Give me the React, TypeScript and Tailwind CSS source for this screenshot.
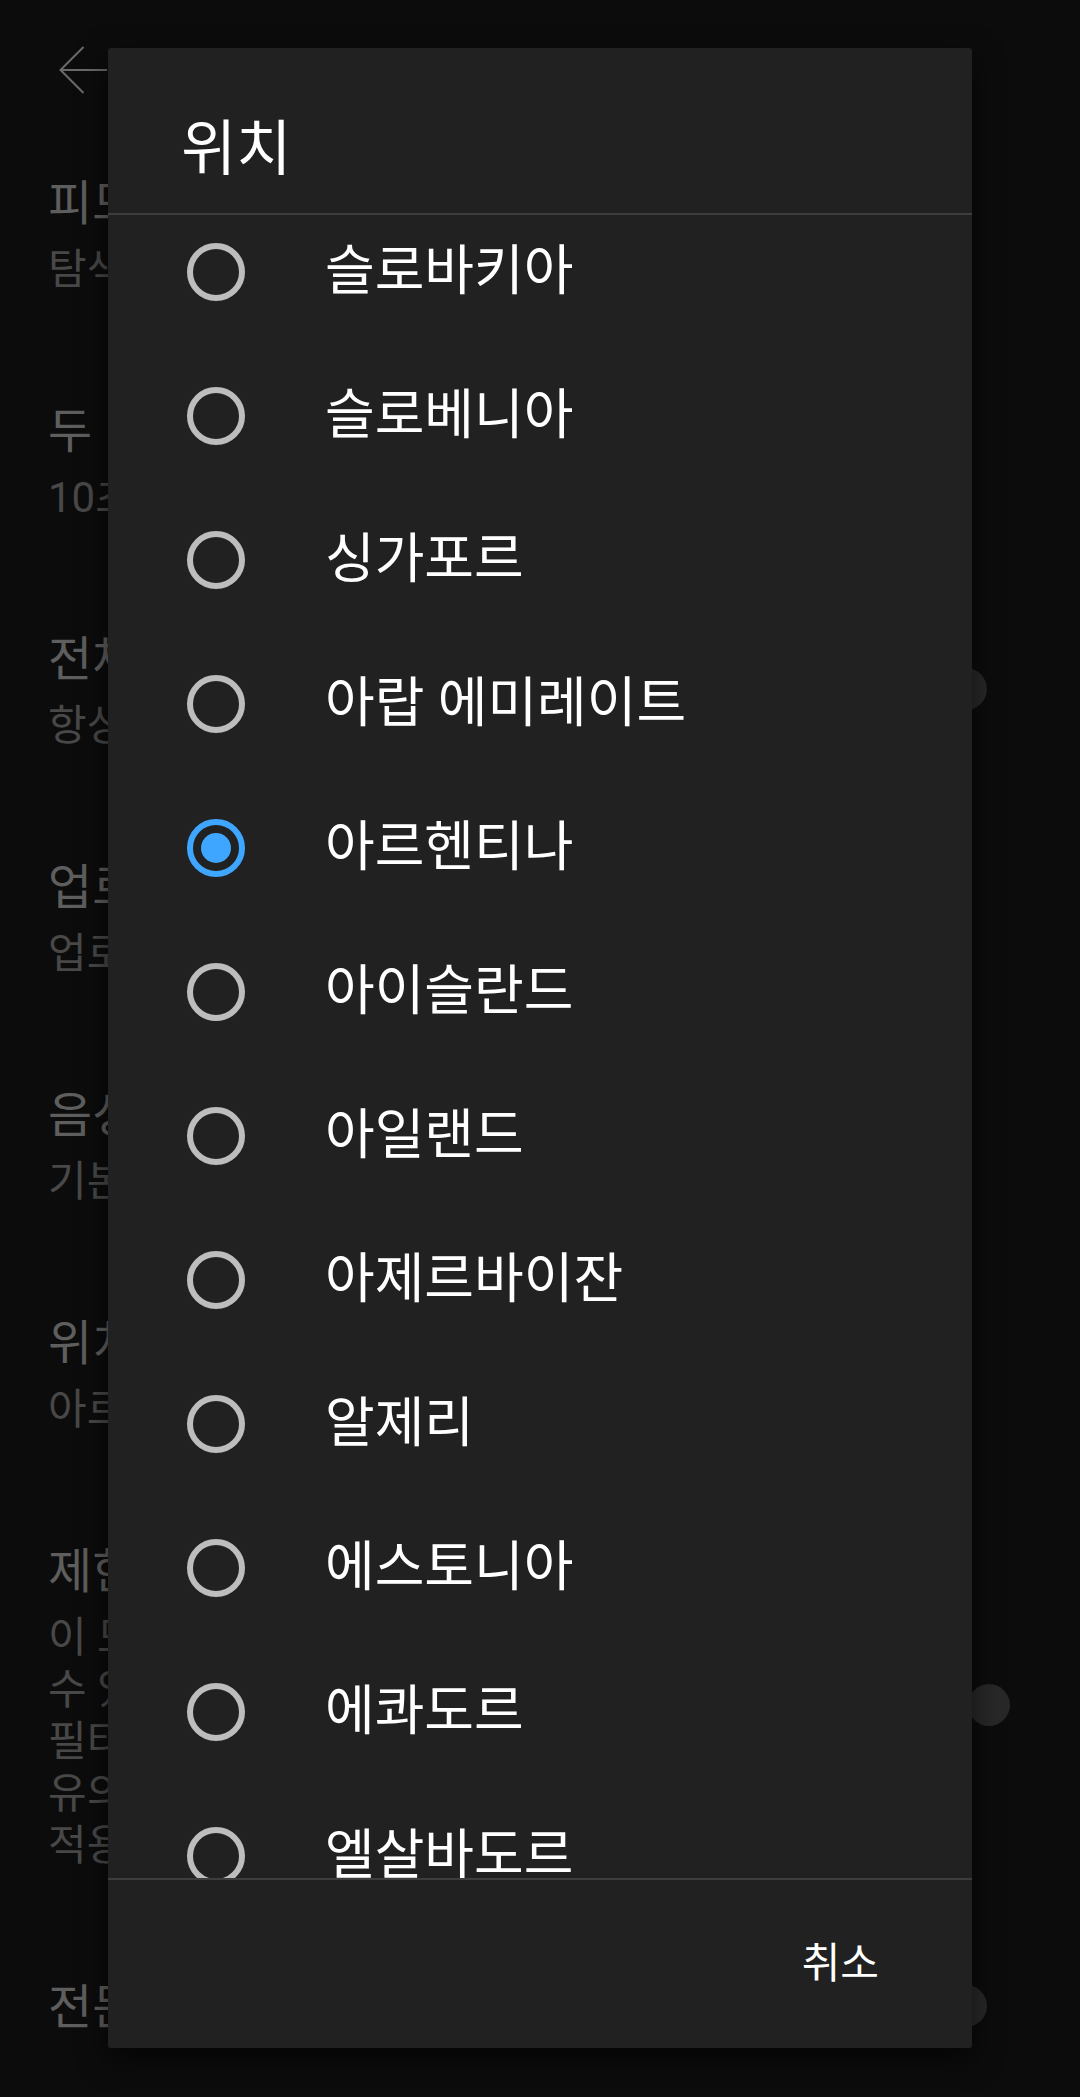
import React from "react";

const FONT = { fontFamily: 'Roboto, "Noto Sans CJK KR", sans-serif' };

const countries = [
  "슬로바키아",
  "슬로베니아",
  "싱가포르",
  "아랍 에미레이트",
  "아르헨티나",
  "아이슬란드",
  "아일랜드",
  "아제르바이잔",
  "알제리",
  "에스토니아",
  "에콰도르",
  "엘살바도르",
  "영국",
];

type Row = { title: string; lines: string[]; toggle?: boolean };

const rows: Row[] = [
  { title: "피드에서 음소거 재생", lines: ["탐색 및 구독 피드"] },
  { title: "두 번 탭하여 탐색", lines: ["10초"] },
  { title: "전체 화면 확대/축소", lines: ["항상 전체 화면 확대/축소"], toggle: true },
  { title: "업로드", lines: ["업로드 화질 지정"] },
  { title: "음성 검색 언어", lines: ["기본 언어"] },
  { title: "위치", lines: ["아르헨티나"] },
  {
    title: "제한 모드",
    lines: [
      "이 모드를 사용하면 성인용 콘텐츠가 포함되어 있을",
      "수 있는 동영상을 숨길 수 있습니다. 정확도가 100%인",
      "필터는 없지만 대부분의 동영상이 걸러집니다.",
      "유의: 이 설정은 이 기기에서 이 앱에만",
      "적용됩니다.",
    ],
    toggle: true,
  },
  { title: "전문가용 통계 사용 설정", lines: [], toggle: true },
];

function Radio({ checked }: { checked: boolean }) {
  return checked ? (
    <div className="w-[58px] h-[58px] shrink-0 rounded-full border-[6px] border-[#3ea6ff] flex items-center justify-center">
      <div className="w-[30px] h-[30px] rounded-full bg-[#3ea6ff]" />
    </div>
  ) : (
    <div className="w-[58px] h-[58px] shrink-0 rounded-full border-[6px] border-[#bdbdbd]" />
  );
}

export default function App() {
  return (
    <div
      className="relative w-[1080px] h-[2097px] overflow-hidden bg-[#0c0c0c]"
      style={FONT}
    >
      {/* Background settings page (dimmed) */}
      <div className="flex flex-col">
        <div className="h-[121px] pl-[59px] pt-[46px]">
          <svg width="48" height="48" viewBox="0 0 48 48" fill="none">
            <path
              d="M48 24H1.5M24.5 1L1.5 24L24.5 47"
              stroke="#6a6a6a"
              strokeWidth="2"
            />
          </svg>
        </div>
        {rows.map((r, i) => (
          <div
            key={i}
            className="flex items-center justify-between pl-[48px] pr-[93px] py-[53px]"
          >
            <div className="flex flex-col">
              <div className="text-[48px] leading-[60px] text-[#5e5e5e] whitespace-nowrap">
                {r.title}
              </div>
              {r.lines.length > 0 && (
                <div className="mt-[10px] flex flex-col">
                  {r.lines.map((l, j) => (
                    <div
                      key={j}
                      className="text-[42px] leading-[52px] text-[#484848] whitespace-nowrap"
                    >
                      {l}
                    </div>
                  ))}
                </div>
              )}
            </div>
            {r.toggle && (
              <div className="w-[42px] h-[42px] -mt-[4px] rounded-full bg-[#282828] shrink-0" />
            )}
          </div>
        ))}
      </div>

      {/* Dialog */}
      <div className="absolute left-[108px] top-[48px] w-[864px] h-[2000px] bg-[#212121] rounded-[3px] flex flex-col shadow-[0_10px_30px_rgba(0,0,0,0.6)]">
        <div className="h-[165px] shrink-0 pl-[73px] pt-[66px]">
          <div className="text-[60px] leading-[72px] text-white">위치</div>
        </div>
        <div className="h-[2px] shrink-0 bg-[#3d3d3d]" />
        <div className="h-[1663px] shrink-0 overflow-hidden">
          <div className="-mt-[15px] flex flex-col">
            {countries.map((c) => (
              <div key={c} className="h-[144px] shrink-0 flex items-center pl-[79px]">
                <Radio checked={c === "아르헨티나"} />
                <div className="ml-[80px] text-[54px] leading-[64px] text-white whitespace-nowrap">
                  {c}
                </div>
              </div>
            ))}
          </div>
        </div>
        <div className="h-[2px] shrink-0 bg-[#3d3d3d]" />
        <div className="flex-1 flex items-center justify-end pr-[93px]">
          <div className="text-[42px] leading-[52px] font-normal text-white">취소</div>
        </div>
      </div>
    </div>
  );
}
